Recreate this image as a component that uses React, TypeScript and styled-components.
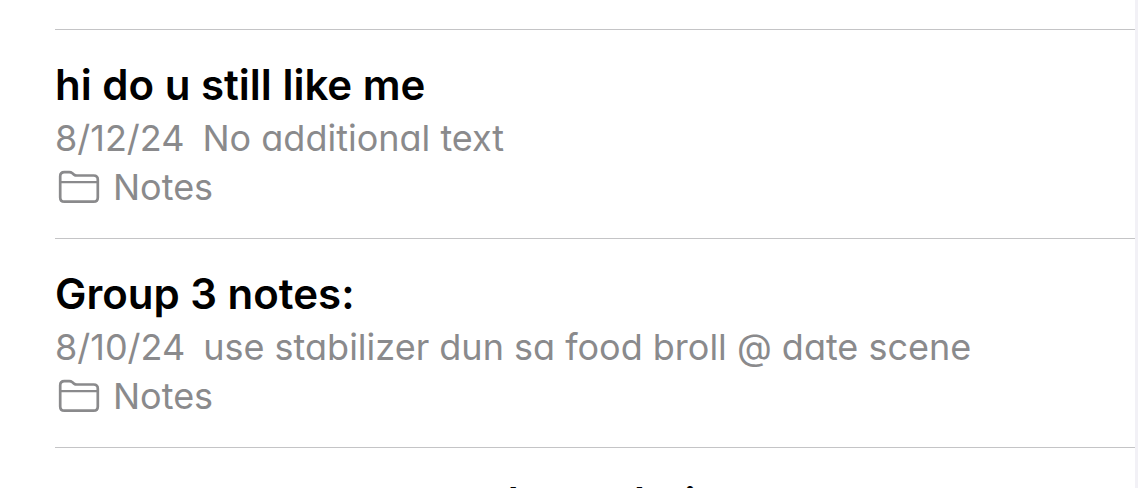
import React from "react";
import styled, { createGlobalStyle } from "styled-components";

const GlobalStyle = createGlobalStyle`
  * { box-sizing: border-box; }
  body {
    margin: 0;
    background: #fff;
    font-family: Inter, "Liberation Sans", sans-serif;
    font-feature-settings: "cv11";
  }
`;

const Screen = styled.main`
  height: 100vh;
  overflow: hidden;
  padding: 29px 0 0 55px;
  background: #fff;
  border-right: 3px solid #f2f1f6;
`;

const NoteList = styled.ul`
  margin: 0;
  padding: 0;
  list-style: none;
`;

const NoteRow = styled.li`
  height: 209px;
  padding-top: 28px;
  border-top: 1px solid #c4c4c6;
  white-space: nowrap;
`;

const Title = styled.h2`
  margin: 0;
  font-size: 42px;
  font-weight: 600;
  line-height: 54px;
  color: #000;
`;

const Detail = styled.p`
  display: flex;
  align-items: center;
  margin: 0;
  font-size: 36px;
  color: #8a8a8c;
`;

const Preview = styled(Detail)`
  gap: 18px;
  line-height: 52px;
`;

const Folder = styled(Detail)`
  gap: 12px;
  line-height: 46px;
`;

const FolderIcon = () => (
  <svg width="46" height="34" viewBox="0 0 46 34" fill="none" stroke="currentColor" strokeWidth="2.7" strokeLinejoin="round" aria-hidden="true">
    <path d="M5.2 27.5V6.4Q5.2 2.2 9.4 2.2H14.2Q16 2.2 17.4 3.3L19 4.6Q20.2 5.5 21.8 5.5H38.6Q42.8 5.5 42.8 9.7V27.5Q42.8 31.7 38.6 31.7H9.4Q5.2 31.7 5.2 27.5Z" />
    <path d="M5.2 12.1H42.8" strokeWidth="2.4" />
  </svg>
);

interface Note {
  title: string;
  date: string;
  preview: string;
}

const notes: Note[] = [
  { title: "hi do u still like me", date: "8/12/24", preview: "No additional text" },
  { title: "Group 3 notes:", date: "8/10/24", preview: "use stabilizer dun sa food broll @ date scene" },
  { title: "reserve everyone can have their own", date: "8/10/24", preview: "No additional text" },
];

export default function App() {
  return (
    <>
      <GlobalStyle />
      <Screen>
        <NoteList>
          {notes.map((note) => (
            <NoteRow key={note.title}>
              <Title>{note.title}</Title>
              <Preview>
                <time>{note.date}</time>
                <span>{note.preview}</span>
              </Preview>
              <Folder>
                <FolderIcon />
                <span>Notes</span>
              </Folder>
            </NoteRow>
          ))}
        </NoteList>
      </Screen>
    </>
  );
}
